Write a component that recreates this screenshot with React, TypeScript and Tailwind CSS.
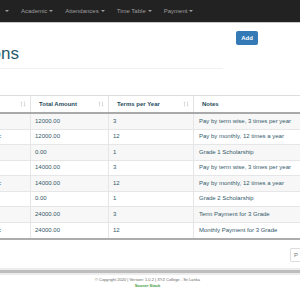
import React from 'react';

type Row = { frag: boolean; amount: string; terms: string; notes: string };

const rows: Row[] = [
  { frag: false, amount: '12000.00', terms: '3', notes: 'Pay by term wise, 3 times per year' },
  { frag: true, amount: '12000.00', terms: '12', notes: 'Pay by monthly, 12 times a year' },
  { frag: false, amount: '0.00', terms: '1', notes: 'Grade 1 Scholarship' },
  { frag: false, amount: '14000.00', terms: '3', notes: 'Pay by term wise, 3 times per year' },
  { frag: true, amount: '14000.00', terms: '12', notes: 'Pay by monthly, 12 times a year' },
  { frag: false, amount: '0.00', terms: '1', notes: 'Grade 2 Scholarship' },
  { frag: false, amount: '24000.00', terms: '3', notes: 'Term Payment for 3 Grade' },
  { frag: true, amount: '24000.00', terms: '12', notes: 'Monthly Payment for 3 Grade' },
];

const Caret = () => (
  <span className="inline-block w-0 h-0 border-t-[2px] border-t-[#9d9d9d] border-x-[2px] border-x-transparent ml-[2px]" />
);

const SortIcon = () => (
  <svg width="6" height="6" viewBox="0 0 6 6" className="shrink-0">
    <path d="M1.5 0.5 L0.3 2 H1.1 V5.5 H1.9 V2 H2.7 Z" fill="#d4d4d4" />
    <path d="M4.5 5.5 L3.3 4 H4.1 V0.5 H4.9 V4 H5.7 Z" fill="#d4d4d4" />
  </svg>
);

export default function App() {
  const navItems = ['Academic', 'Attendances', 'Time Table', 'Payment'];

  return (
    <div className="w-[300px] h-[300px] overflow-hidden bg-white font-['Liberation_Sans',Arial,sans-serif]">
      {/* navbar */}
      <nav className="h-[23px] bg-[#222] border-b border-[#c9c9c9] flex items-center gap-[12px] pl-[3px] text-[6px] text-[#9d9d9d] whitespace-nowrap">
        <span className="flex items-center">
          <Caret />
        </span>
        {navItems.map((item) => (
          <span key={item} className="flex items-center">
            {item}
            <Caret />
          </span>
        ))}
      </nav>

      {/* add button */}
      <div className="flex justify-end pr-[42px] pt-[8px]">
        <button className="w-[22px] h-[14px] bg-[#337ab7] rounded-[2px] text-white text-[6px] font-bold">
          Add
        </button>
      </div>

      {/* page header */}
      <div className="w-[223px] h-[24px] border-b border-[#f0f0f0]">
        <div className="w-[19px] overflow-hidden flex justify-end">
          <h1 className="whitespace-nowrap text-[17px] leading-[17px] text-[#1f5a6c]">Payment Options</h1>
        </div>
      </div>

      {/* table */}
      <div className="mt-[26px] w-[300px] overflow-hidden">
        <div className="w-[320px]">
          <div className="grid grid-cols-[31px_78px_85px_126px] h-[19px] border-t border-[#dddddd] border-b-2 border-b-[#a9a9a9] text-[6px] font-bold text-[#1f4c5c]">
            <div className="flex items-center justify-end pr-[4px] border-r border-[#e3e3e3]">
              <SortIcon />
            </div>
            <div className="flex items-center justify-between pl-[8px] pr-[4px] border-r border-[#e3e3e3]">
              <span>Total Amount</span>
              <SortIcon />
            </div>
            <div className="flex items-center justify-between pl-[8px] pr-[4px] border-r border-[#e3e3e3]">
              <span>Terms per Year</span>
              <SortIcon />
            </div>
            <div className="flex items-center pl-[8px]">
              <span>Notes</span>
            </div>
          </div>

          <div className="divide-y divide-[#e6e6e6] border-b-2 border-[#adadad] text-[6px] text-[#32596a]">
            {rows.map((r, i) => (
              <div
                key={i}
                className={`grid grid-cols-[31px_78px_85px_126px] h-[15.5px] ${i % 2 === 0 ? 'bg-[#f7f7f7]' : 'bg-white'}`}
              >
                <div className="flex items-center overflow-hidden border-r border-[#e6e6e6]">
                  {r.frag && <span className="-ml-[2px]">c</span>}
                </div>
                <div className="flex items-center pl-[4px] border-r border-[#e6e6e6]">{r.amount}</div>
                <div className="flex items-center pl-[4px] border-r border-[#e6e6e6]">{r.terms}</div>
                <div className="flex items-center pl-[5px] whitespace-nowrap">{r.notes}</div>
              </div>
            ))}
          </div>
        </div>
      </div>

      {/* pagination */}
      <div className="flex justify-end mt-[8px]">
        <div className="w-[10px] h-[14px] border border-r-0 border-[#dddddd] rounded-l-[2px] flex items-center pl-[3px] text-[6px] text-[#777]">
          P
        </div>
      </div>

      {/* footer */}
      <div className="mt-[6px]">
        <div className="h-[2px] bg-[#ececec]" />
        <div className="h-[3px] bg-[#bdbdbd]" />
        <div className="h-[2px] bg-[#ececec]" />
      </div>
      <div className="pr-[5px] pt-[2px] text-center text-[4px] leading-[6px]">
        <p className="text-[#666]">© Copyright 2020 | Version: 1.0.2 | XYZ College - Sri Lanka</p>
        <p className="text-[#3e9d3e] font-bold">Sooner Stack</p>
      </div>
    </div>
  );
}
